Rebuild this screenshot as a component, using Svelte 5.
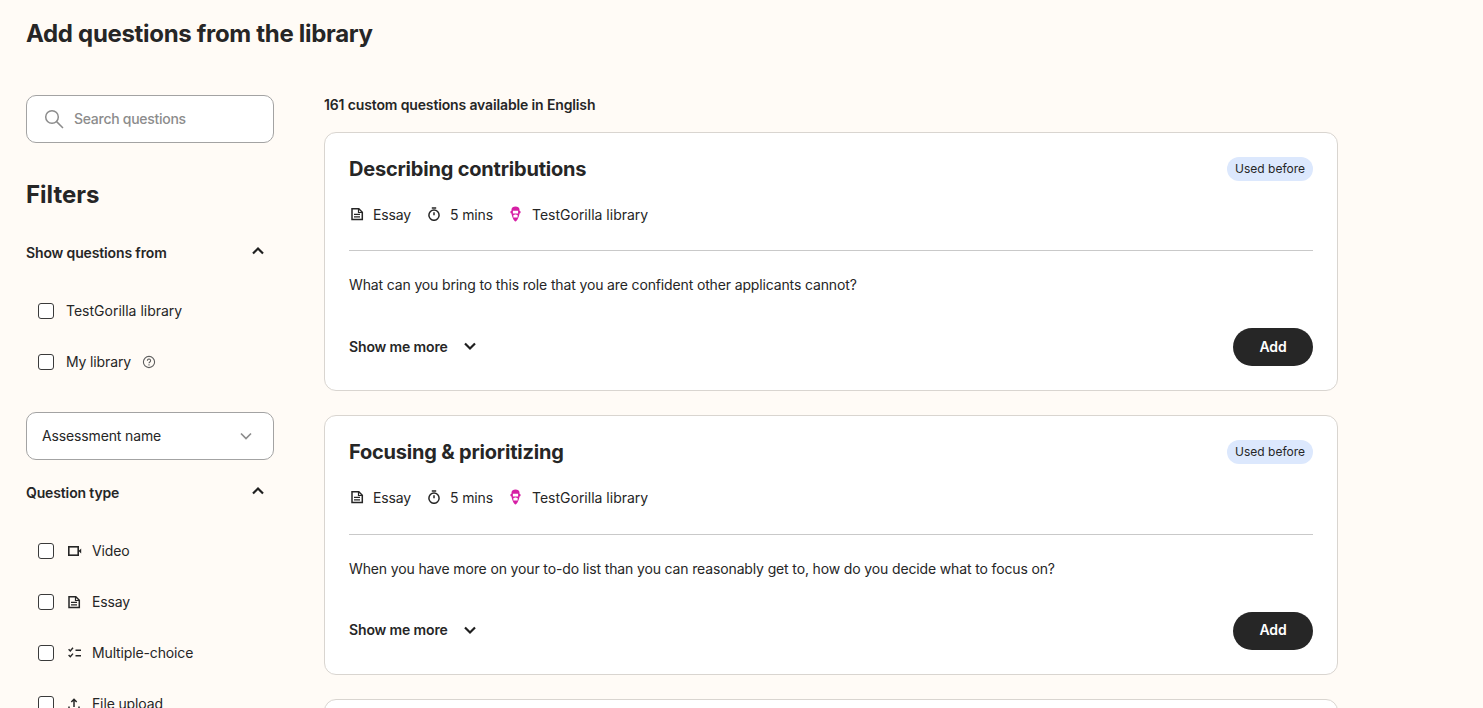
<script>
  const cards = [
    { title: 'Describing contributions', q: 'What can you bring to this role that you are confident other applicants cannot?' },
    { title: 'Focusing & prioritizing', q: 'When you have more on your to-do list than you can reasonably get to, how do you decide what to focus on?' }
  ];
</script>

{#snippet essay()}
  <svg class="ic" viewBox="0 0 14 14" width="14" height="14" fill="none" stroke="#262626" stroke-width="1.500"><path d="M1 1.700h6.800l3.500 3.500v7.300H1z"/><path d="M7.500 1.700v3.800h3.800" stroke-width="1.200"/><path d="M3 7.300h6M3 9.900h6" stroke-width="1.300"/></svg>
{/snippet}
{#snippet chevUp()}
  <svg class="chev" viewBox="0 0 14 10" width="14" height="10" fill="none" stroke="#1f1f1f" stroke-width="2.200"><path d="M2 7.500l5-5 5 5"/></svg>
{/snippet}
{#snippet box()}<span class="box"></span>{/snippet}

<div class="page">
  <h1>Add questions from the library</h1>
  <div class="cols">
    <aside>
      <div class="field search">
        <svg viewBox="0 0 20 20" width="20" height="20" fill="none" stroke="#8c8c8c" stroke-width="1.500"><circle cx="8" cy="8" r="6.300"/><path d="M12.600 12.600l6.400 6.400"/></svg>
        <span class="t">Search questions</span>
      </div>
      <h2>Filters</h2>
      <div class="grouphead first"><b>Show questions from</b>{@render chevUp()}</div>
      <label class="opt opt1">{@render box()}<span class="lib t">TestGorilla library</span></label>
      <label class="opt">{@render box()}<span class="t">My library</span>
        <svg class="help" viewBox="0 0 14 14" width="14" height="14" fill="none" stroke="#5e5e5e" stroke-width="1.100"><circle cx="7" cy="7" r="5.600"/><path d="M5.400 5.700a1.600 1.600 0 1 1 2.500 1.300c-.6.400-.9.700-.9 1.300"/><path d="M7 9.300v1.100"/></svg>
      </label>
      <div class="field select"><span class="t">Assessment name</span>
        <svg viewBox="0 0 14 10" width="14" height="10" fill="none" stroke="#8c8c8c" stroke-width="1.700"><path d="M2 2.500l5 5 5-5"/></svg>
      </div>
      <div class="grouphead"><b>Question type</b>{@render chevUp()}</div>
      <label class="opt opt1">{@render box()}
        <svg class="ic" viewBox="0 0 14 14" width="14" height="14" fill="none" stroke="#262626" stroke-width="1.600"><rect x="0.800" y="2.800" width="9.400" height="8.400"/><path d="M10.500 7l2.700-2.600v5.200z" fill="#262626" stroke="none"/></svg>
        <span class="t">Video</span></label>
      <label class="opt">{@render box()}{@render essay()}<span class="t">Essay</span></label>
      <label class="opt">{@render box()}
        <svg class="ic" viewBox="0 0 14 14" width="14" height="14" fill="none" stroke="#262626" stroke-width="1.400"><path d="M.6 3.200l1.700 1.800L5 1.800M.6 9l1.700 1.800L5 7.600"/><path d="M7.500 4.200h5.500M7.500 9.800h5.500"/></svg>
        <span class="t">Multiple-choice</span></label>
      <label class="opt">{@render box()}
        <svg class="ic" viewBox="0 0 14 14" width="14" height="14" fill="none" stroke="#262626" stroke-width="1.500"><path d="M6 10V2.500M3.300 5L6 2.300 8.700 5"/><path d="M1 9.500v3h10v-3"/></svg>
        <span class="t">File upload</span></label>
    </aside>
    <main>
      <p class="count">161 custom questions available in English</p>
      {#each cards as c}
        <article>
          <div class="top">
            <h3>{c.title}</h3>
            <span class="pill">Used before</span>
          </div>
          <div class="meta">
            <span class="mi1">{@render essay()}</span><span class="m1">Essay</span>
            <svg class="ic timer" viewBox="0 0 14 14" width="14" height="14" fill="none" stroke="#262626" stroke-width="1.500"><circle cx="7" cy="8.200" r="5.100"/><path d="M4.800 1h4.400M7 5.300v3"/></svg><span class="m1">5 mins</span>
            <svg class="ic gor" viewBox="0 0 13 16" width="13" height="16"><path d="M2.500 3.500C2.500 1.500 4.300.5 6.500.5s4 1 4 3v1.300c1 .2 1.300 .9 1.100 1.700-.2.700-.6 1-1.100 1.100-.3 3-2.400 7.900-4 7.900s-3.700-4.900-4-7.900c-.5-.1-.9-.4-1.100-1.100-.2-.8.100-1.500 1.100-1.700z" fill="#d61fa5"/><path d="M3.900 4.800h5.200v2.600H3.900zM4.400 9h4.200v2.600H4.400z" fill="#fff"/><path d="M5.500 7.400h2V9h-2z" fill="#f08ad3"/></svg>
            <span class="lib">TestGorilla library</span>
          </div>
          <hr />
          <p class="q">{c.q}</p>
          <div class="bottom">
            <span class="more"><b>Show me more</b>
              <svg viewBox="0 0 14 10" width="14" height="10" fill="none" stroke="#1f1f1f" stroke-width="2.200"><path d="M2 2.500l5 5 5-5"/></svg>
            </span>
            <button>Add</button>
          </div>
        </article>
      {/each}
      <article></article>
    </main>
  </div>
</div>

<style>
  :global(body) {
    margin: 0;
    background: #fffbf6;
    overflow: hidden;
    height: 708px;
  }
  .page {
    font-family: Inter, "Liberation Sans", sans-serif;
    color: #262626;
    font-size: 14px;
    padding: 0 26px;
    letter-spacing: -0.01em;
  }
  h1 {
    margin: 0;
    padding-top: 19px;
    font-size: 24px;
    line-height: 30px;
    font-weight: 700;
    letter-spacing: -0.013em;
  }
  .cols {
    display: flex;
    gap: 50px;
    padding-top: 46px;
  }
  aside {
    width: 248px;
    flex: none;
  }
  main {
    width: 1014px;
    flex: none;
  }
  .field {
    box-sizing: border-box;
    height: 48px;
    background: #fff;
    border: 1px solid #a3a3a3;
    border-radius: 10px;
    display: flex;
    align-items: center;
  }
  .t {
    padding-bottom: 2px;
  }
  .search {
    padding-left: 17px;
    gap: 10px;
    color: #8c8c8c;
    font-weight: 500;
    letter-spacing: -0.02em;
  }
  h2 {
    margin: 0;
    padding-top: 37px;
    font-size: 24px;
    line-height: 30px;
    font-weight: 700;
    letter-spacing: 0;
  }
  .grouphead {
    display: flex;
    align-items: center;
    justify-content: space-between;
    padding-right: 9px;
    height: 20px;
  }
  .grouphead b {
    font-weight: 600;
  }
  .chev {
    margin-top: -2px;
  }
  .first {
    margin-top: 32px;
  }
  .opt {
    display: flex;
    align-items: center;
    height: 20px;
    margin-top: 31px;
    padding-left: 12px;
  }
  .opt1 {
    margin-top: 39px;
  }
  .box {
    box-sizing: border-box;
    width: 16px;
    height: 16px;
    background: #fff;
    border: 1.300px solid #3a3a3a;
    border-radius: 3px;
    margin-right: 12px;
    flex: none;
  }
  .opt .ic {
    margin: 0 10px 0 2px;
    flex: none;
  }
  .lib {
    letter-spacing: 0;
  }
  .help {
    margin-left: 11px;
  }
  .select {
    margin-top: 40px;
    justify-content: space-between;
    padding: 0 20px 0 15px;
  }
  .select + .grouphead {
    margin-top: 22px;
  }
  .count {
    margin: 0 0 17px;
    height: 20px;
    line-height: 20px;
    font-weight: 600;
  }
  article {
    box-sizing: border-box;
    background: #fff;
    border: 1px solid #d9d5d0;
    border-radius: 12px;
    padding: 24px;
    height: 259.300px;
    margin-bottom: 24px;
  }
  .top {
    display: flex;
    justify-content: space-between;
    align-items: center;
    height: 24px;
  }
  h3 {
    margin: 0;
    font-size: 20px;
    font-weight: 700;
    line-height: 24px;
    letter-spacing: -0.01em;
  }
  .pill {
    background: #dce8fd;
    border-radius: 12px;
    height: 24px;
    line-height: 24px;
    padding: 0 8px;
    font-size: 12px;
    letter-spacing: 0;
  }
  .meta {
    display: flex;
    align-items: center;
    height: 20px;
    margin-top: 23px;
  }
  .mi1 {
    display: flex;
    margin: 0 8px 0 2px;
  }
  .timer {
    margin-right: 9px;
    flex: none;
  }
  .gor {
    margin-right: 10px;
    flex: none;
  }
  .m1 {
    margin-right: 16px;
  }
  hr {
    border: 0;
    border-top: 1px solid #c9c9c9;
    margin: 26.300px 0 0;
  }
  .q {
    margin: 24px 0 0;
    line-height: 20px;
  }
  .bottom {
    display: flex;
    justify-content: space-between;
    align-items: center;
    margin-top: 33px;
  }
  .more {
    display: flex;
    align-items: center;
    gap: 15px;
    padding-bottom: 2px;
  }
  .more b {
    font-weight: 600;
  }
  button {
    width: 80px;
    height: 38px;
    border: 0;
    border-radius: 19px;
    background: #262626;
    color: #fff;
    font: inherit;
    font-weight: 600;
    letter-spacing: inherit;
    padding: 0 0 2px;
  }
</style>
